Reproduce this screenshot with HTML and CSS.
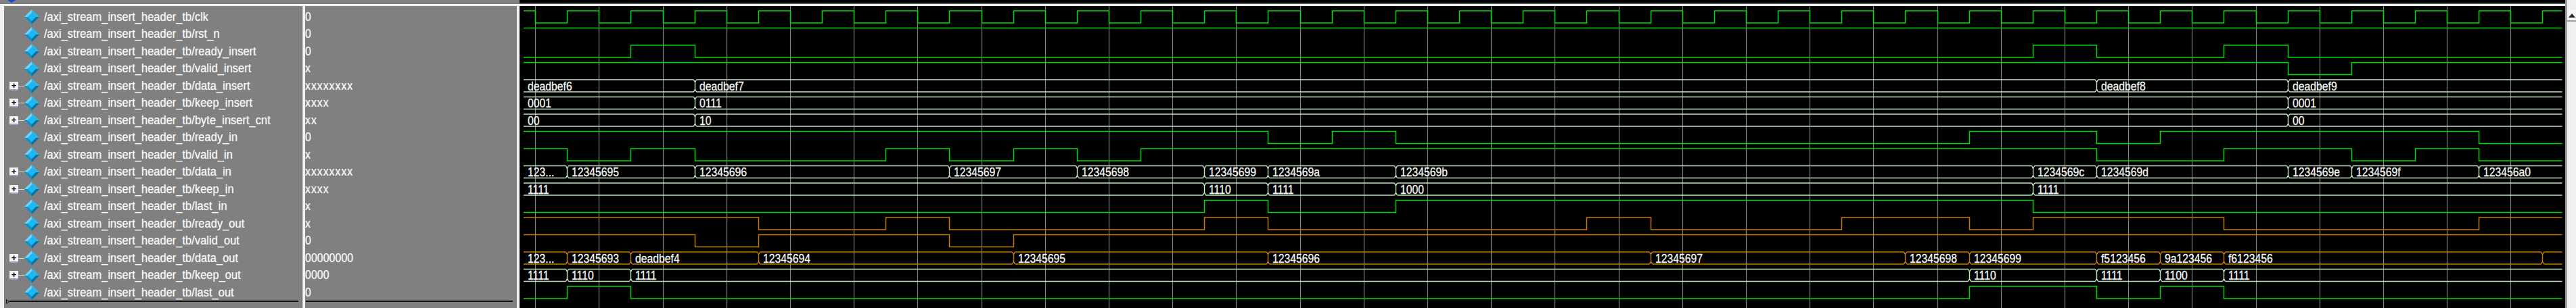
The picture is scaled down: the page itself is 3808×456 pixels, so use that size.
FILE: index.html
```html
<!DOCTYPE html>
<html lang="en">
<head>
<meta charset="utf-8">
<title>Wave</title>
<link rel="stylesheet" href="styles.css">
</head>
<body>
<svg class="defs" width="0" height="0" aria-hidden="true">
  <symbol id="diamond" viewBox="0 0 22 22">
    <polygon points="11,0 11,5 5,11 0,11" fill="#6ed4f8"/>
    <polygon points="11,0 22,11 17,11 11,5" fill="#2cb6ec"/>
    <polygon points="22,11 11,22 11,17 17,11" fill="#0074a4"/>
    <polygon points="0,11 5,11 11,17 11,22" fill="#0a94cc"/>
    <polygon points="11,5 17,11 11,17 5,11" fill="#16baf8"/>
  </symbol>
</svg>
<div class="wave-window">
  <section class="pane names">
    <div class="strip strip-gray"><span class="group-icon"></span></div>
    <div class="rows">
      <div class="row"><span class="tree"></span><svg class="icon"><use href="#diamond"/></svg><span class="label">/axi_stream_insert_header_tb/clk</span></div>
      <div class="row"><span class="tree"></span><svg class="icon"><use href="#diamond"/></svg><span class="label">/axi_stream_insert_header_tb/rst_n</span></div>
      <div class="row"><span class="tree"></span><svg class="icon"><use href="#diamond"/></svg><span class="label">/axi_stream_insert_header_tb/ready_insert</span></div>
      <div class="row"><span class="tree"></span><svg class="icon"><use href="#diamond"/></svg><span class="label">/axi_stream_insert_header_tb/valid_insert</span></div>
      <div class="row"><span class="tree"><i class="plus">+</i><i class="stub"></i></span><svg class="icon"><use href="#diamond"/></svg><span class="label">/axi_stream_insert_header_tb/data_insert</span></div>
      <div class="row"><span class="tree"><i class="plus">+</i><i class="stub"></i></span><svg class="icon"><use href="#diamond"/></svg><span class="label">/axi_stream_insert_header_tb/keep_insert</span></div>
      <div class="row"><span class="tree"><i class="plus">+</i><i class="stub"></i></span><svg class="icon"><use href="#diamond"/></svg><span class="label">/axi_stream_insert_header_tb/byte_insert_cnt</span></div>
      <div class="row"><span class="tree"></span><svg class="icon"><use href="#diamond"/></svg><span class="label">/axi_stream_insert_header_tb/ready_in</span></div>
      <div class="row"><span class="tree"></span><svg class="icon"><use href="#diamond"/></svg><span class="label">/axi_stream_insert_header_tb/valid_in</span></div>
      <div class="row"><span class="tree"><i class="plus">+</i><i class="stub"></i></span><svg class="icon"><use href="#diamond"/></svg><span class="label">/axi_stream_insert_header_tb/data_in</span></div>
      <div class="row"><span class="tree"><i class="plus">+</i><i class="stub"></i></span><svg class="icon"><use href="#diamond"/></svg><span class="label">/axi_stream_insert_header_tb/keep_in</span></div>
      <div class="row"><span class="tree"></span><svg class="icon"><use href="#diamond"/></svg><span class="label">/axi_stream_insert_header_tb/last_in</span></div>
      <div class="row"><span class="tree"></span><svg class="icon"><use href="#diamond"/></svg><span class="label">/axi_stream_insert_header_tb/ready_out</span></div>
      <div class="row"><span class="tree"></span><svg class="icon"><use href="#diamond"/></svg><span class="label">/axi_stream_insert_header_tb/valid_out</span></div>
      <div class="row"><span class="tree"><i class="plus">+</i><i class="stub"></i></span><svg class="icon"><use href="#diamond"/></svg><span class="label">/axi_stream_insert_header_tb/data_out</span></div>
      <div class="row"><span class="tree"><i class="plus">+</i><i class="stub"></i></span><svg class="icon"><use href="#diamond"/></svg><span class="label">/axi_stream_insert_header_tb/keep_out</span></div>
      <div class="row"><span class="tree"></span><svg class="icon"><use href="#diamond"/></svg><span class="label">/axi_stream_insert_header_tb/last_out</span></div>
      <div class="end-mark"><svg class="end-tip" viewBox="0 0 5 7"><polygon points="0.5,0.5 4.5,3.5 0.5,6.5" fill="none" stroke="#111"/></svg><span class="end-line"></span></div>
    </div>
  </section>
  <section class="pane values">
    <div class="strip strip-gray"></div>
    <div class="rows">
      <div class="row"><span class="label">0</span></div>
      <div class="row"><span class="label">0</span></div>
      <div class="row"><span class="label">0</span></div>
      <div class="row"><span class="label unknown">x</span></div>
      <div class="row"><span class="label unknown">xxxxxxxx</span></div>
      <div class="row"><span class="label unknown">xxxx</span></div>
      <div class="row"><span class="label unknown">xx</span></div>
      <div class="row"><span class="label">0</span></div>
      <div class="row"><span class="label unknown">x</span></div>
      <div class="row"><span class="label unknown">xxxxxxxx</span></div>
      <div class="row"><span class="label unknown">xxxx</span></div>
      <div class="row"><span class="label unknown">x</span></div>
      <div class="row"><span class="label unknown">x</span></div>
      <div class="row"><span class="label">0</span></div>
      <div class="row"><span class="label">00000000</span></div>
      <div class="row"><span class="label">0000</span></div>
      <div class="row"><span class="label">0</span></div>
      <div class="end-mark"><span class="end-line"></span></div>
    </div>
  </section>
  <section class="pane plot">
    <div class="strip strip-dark"></div>
    <svg id="waves" class="waves" viewBox="768 9 3024 447" width="3024" height="447"></svg>
  </section>
  <aside class="scrollbar">
    <div class="scroll-btn"><span class="arrow"></span></div>
  </aside>
</div>
<script src="wave.js"></script>
</body>
</html>
```
FILE: styles.css
```css
* { box-sizing: border-box; }
html, body { margin: 0; padding: 0; background: #000; }
.defs { position: absolute; }

.wave-window {
  display: flex;
  width: 3808px;
  height: 456px;
  overflow: hidden;
  font-family: "Liberation Sans", Arial, sans-serif;
}

.pane { display: flex; flex-direction: column; height: 456px; }
.names { width: 448px; }
.values { width: 320px; }
.plot { width: 3024px; background: #000; }

.strip { height: 9px; flex: none; border-bottom: 3px solid #f2f2f2; }
.strip-gray { background: #808080; }
.strip-dark { background: linear-gradient(#000 4px, #555 4px); }

.group-icon {
  display: block;
  width: 0;
  height: 0;
  margin-left: 11px;
  border-left: 6px solid transparent;
  border-right: 6px solid transparent;
  border-top: 4px solid #1646e0;
}

.rows {
  flex: 1;
  padding-top: 3.25px;
  background: #808080;
  min-height: 0;
}
.names .rows { border-left: 6px solid #f2f2f2; border-right: 1px solid #c8c8c8; }
.values .rows { border-left: 3px solid #f2f2f2; border-right: 4px solid #f2f2f2; }

.row {
  display: flex;
  align-items: center;
  height: 25.5px;
}

.tree { display: flex; align-items: center; width: 30px; padding-left: 8px; flex: none; }
.plus {
  width: 13px;
  height: 13px;
  flex: none;
  background: #f4f4f8;
  border-bottom: 2px solid #9aa4c8;
  color: #000;
  font: bold 13px/11px "Liberation Sans", sans-serif;
  text-align: center;
}
.stub { width: 9px; height: 1px; flex: none; background: #d8d8d8; }

.icon { width: 22px; height: 22px; flex: none; }

.label {
  display: inline-block;
  color: #f8f8f8;
  line-height: 25px;
  white-space: pre;
  transform: translateY(-0.7px) scaleY(1.12);
  text-shadow: 0 0 1px rgba(255, 255, 255, 0.55);
}
.names .label { margin-left: 7px; font-size: 16.5px; }
.values .label { font-size: 16px; }
.values .unknown { letter-spacing: 0.9px; }

.end-mark { display: flex; align-items: center; height: 3px; margin-top: -1px; }
.names .end-mark { padding: 0 6px 0 3px; }
.values .end-mark { padding: 0 6px 0 1px; }
.end-tip { width: 5px; height: 7px; flex: none; overflow: visible; }
.end-line { flex: 1; height: 2px; background: #111; }

.waves { display: block; }
.grid { stroke: #808080; stroke-width: 1.2; fill: none; }
.wire { fill: none; stroke-width: 1.5; }
.wire-green { stroke: #00dc00; }
.wire-orange { stroke: #c87c00; }
.bus { fill: none; stroke-width: 1.4; }
.bus-green { stroke: #c4e8c4; }
.bus-orange { stroke: #c87c00; }
.bus-text {
  fill: #f8f8f8;
  stroke: #f8f8f8;
  stroke-width: 0.25px;
  font-size: 15.75px;
  transform-box: fill-box;
  transform-origin: center;
  transform: scaleY(1.12);
}

.scrollbar {
  width: 16px;
  flex: none;
  background: #f0f0f0;
  border-left: 3px solid #9c9c9c;
  padding-top: 15px;
}
.scroll-btn {
  display: flex;
  align-items: center;
  justify-content: center;
  height: 17px;
  background: #f8f8f8;
  border-bottom: 2px solid #a0a0a0;
}
.arrow {
  width: 0;
  height: 0;
  border-left: 5px solid transparent;
  border-right: 5px solid transparent;
  border-bottom: 6px solid #222;
}
```
FILE: wave.js
```js
// Waveform data: every change happens on a rising clock edge, given by its index.
var NS = 'http://www.w3.org/2000/svg';
var svg = document.getElementById('waves');
var PERIOD = 94.2, FALL0 = 791.6, START = 774, END = 3787.5;
var ROW0 = 16, ROWH = 25.5, AMP = 18;

function snap(x) { return Math.floor(x) + 0.5; }
function rise(k) { return snap(FALL0 + PERIOD / 2 + PERIOD * k); }
function fall(k) { return snap(FALL0 + PERIOD * k); }

function add(tag, attrs, text) {
  var el = document.createElementNS(NS, tag);
  for (var a in attrs) el.setAttribute(a, attrs[a]);
  if (text) el.textContent = text;
  svg.appendChild(el);
  return el;
}

var rows = [
  { clock: true },
  { start: 1, edges: [] },
  { start: 0, edges: [1, 2, 23, 24, 26, 27] },
  { start: 1, edges: [27, 28] },
  { bus: [[null, 'deadbef6'], [2, 'deadbef7'], [24, 'deadbef8'], [27, 'deadbef9']] },
  { bus: [[null, '0001'], [2, '0111'], [27, '0001']] },
  { bus: [[null, '00'], [2, '10'], [27, '00']] },
  { start: 1, edges: [11, 12, 13, 22, 24, 25, 30] },
  { start: 1, edges: [0, 1, 2, 5, 6, 7, 8, 9, 24, 26, 28, 29, 30] },
  { bus: [[null, '123...'], [0, '12345695'], [2, '12345696'], [6, '12345697'], [8, '12345698'], [10, '12345699'], [11, '1234569a'], [13, '1234569b'], [23, '1234569c'], [24, '1234569d'], [27, '1234569e'], [28, '1234569f'], [30, '123456a0']] },
  { bus: [[null, '1111'], [10, '1110'], [11, '1111'], [13, '1000'], [23, '1111']] },
  { start: 0, edges: [10, 11, 13, 23] },
  { start: 1, edges: [3, 5, 6, 10, 11, 16, 17, 20, 22, 23, 26, 30], orange: true },
  { start: 1, edges: [2, 3, 6, 7], orange: true },
  { bus: [[null, '123...'], [0, '12345693'], [1, 'deadbef4'], [3, '12345694'], [7, '12345695'], [11, '12345696'], [17, '12345697'], [21, '12345698'], [22, '12345699'], [24, 'f5123456'], [25, '9a123456'], [26, 'f6123456'], [31, '']], orange: true },
  { bus: [[null, '1111'], [0, '1110'], [1, '1111'], [22, '1110'], [24, '1111'], [25, '1100'], [26, '1111']] },
  { start: 0, edges: [0, 1, 22, 24, 25, 26] }
];

for (var g = 0; g < 32; g++) {
  add('path', { 'class': 'grid', d: 'M' + fall(g) + ' 9V456' });
}

rows.forEach(function (row, i) {
  var hi = ROW0 + ROWH * i, lo = hi + AMP;
  if (row.bus) drawBus(row, hi, lo);
  else if (row.clock) drawClock(hi, lo);
  else drawLevel(row, hi, lo);
});

function drawClock(hi, lo) {
  var d = 'M' + START + ' ' + hi;
  for (var k = 0; k < 32; k++) {
    d += 'H' + fall(k) + 'V' + lo + 'H' + rise(k) + 'V' + hi;
  }
  d += 'H' + END;
  add('path', { 'class': 'wire wire-green', d: d });
}

function drawLevel(row, hi, lo) {
  var up = row.start === 1;
  var d = 'M' + START + ' ' + (up ? hi : lo);
  row.edges.forEach(function (k) {
    up = !up;
    d += 'H' + rise(k) + 'V' + (up ? hi : lo);
  });
  d += 'H' + END;
  add('path', { 'class': 'wire ' + (row.orange ? 'wire-orange' : 'wire-green'), d: d });
}

function drawBus(row, hi, lo) {
  var d = '';
  var left = START;
  var labels = [];
  row.bus.forEach(function (seg, n) {
    var next = row.bus[n + 1];
    var right = next ? rise(next[0]) : END;
    var x0 = n ? left + 2 : left;
    var x1 = next ? right - 2 : right;
    d += 'M' + x0 + ' ' + hi + 'H' + x1 + 'M' + x0 + ' ' + lo + 'H' + x1;
    if (next) {
      d += 'M' + x1 + ' ' + hi + 'L' + right + ' ' + (hi + 4) + 'V' + (lo - 4) + 'L' + x1 + ' ' + lo;
      d += 'M' + (right + 2) + ' ' + hi + 'L' + right + ' ' + (hi + 4) + 'M' + right + ' ' + (lo - 4) + 'L' + (right + 2) + ' ' + lo;
    }
    if (seg[1]) labels.push({ x: left + (n ? 6.5 : 6), text: seg[1] });
    left = right;
  });
  add('path', { 'class': 'bus ' + (row.orange ? 'bus-orange' : 'bus-green'), d: d });
  labels.forEach(function (l) {
    add('text', { 'class': 'bus-text', x: l.x, y: hi + 15 }, l.text);
  });
}
```
